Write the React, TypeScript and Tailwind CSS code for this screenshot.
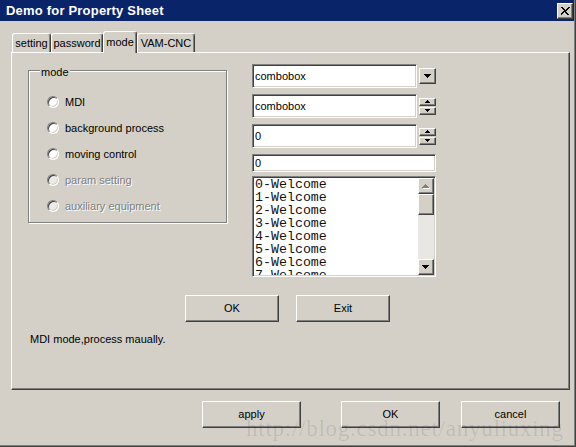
import React from "react"

const raised =
  "border border-t-white border-l-white border-b-[#404040] border-r-[#404040] shadow-[inset_-1px_-1px_0_#808080] bg-[#d4d0c8]"
const sunken =
  "border border-t-[#808080] border-l-[#808080] border-b-white border-r-white shadow-[inset_1px_1px_0_#404040,inset_-1px_-1px_0_#d4d0c8] bg-white"

function Arrow({ small = false, up = false, disabled = false }: { small?: boolean; up?: boolean; disabled?: boolean }) {
  const d = small ? "M0 0h5v1h-1v1h-1v1h-1v-1h-1v-1h-1z" : "M0 0h7v1h-1v1h-1v1h-1v1h-1v-1h-1v-1h-1v-1h-1z"
  const w = small ? 5 : 7
  const h = small ? 3 : 4
  return (
    <svg width={w + 1} height={h + 1} viewBox={`0 0 ${w + 1} ${h + 1}`} className={up ? "rotate-180" : ""} shapeRendering="crispEdges">
      {disabled && <path d={d} fill="#fff" transform={up ? "translate(0 0)" : "translate(1 1)"} />}
      <path d={d} fill={disabled ? "#808080" : "#000"} transform={up ? "translate(1 1)" : ""} />
    </svg>
  )
}

function Radio({ label, disabled = false }: { label: string; disabled?: boolean }) {
  return (
    <div className="h-[26px] flex items-center gap-[6px]">
      <span
        className={`w-[12px] h-[12px] rounded-full border border-t-[#808080] border-l-[#808080] border-b-white border-r-white shadow-[inset_1px_1px_0_#404040,inset_-1px_-1px_0_#d4d0c8] ${
          disabled ? "bg-[#ecebe7]" : "bg-white"
        }`}
      />
      <span className={disabled ? "text-[#808080] [text-shadow:1px_1px_0_#fff]" : "text-black"}>{label}</span>
    </div>
  )
}

function Spin() {
  return (
    <div className="flex flex-col gap-[1px]">
      <div className={`${raised} w-[17px] h-[8px] flex items-center justify-center`}>
        <Arrow small up />
      </div>
      <div className={`${raised} w-[17px] h-[8px] flex items-center justify-center`}>
        <Arrow small />
      </div>
    </div>
  )
}

const items = ["0-Welcome", "1-Welcome", "2-Welcome", "3-Welcome", "4-Welcome", "5-Welcome", "6-Welcome", "7-Welcome"]

export default function App() {
  return (
    <div className="relative w-[576px] h-[447px] bg-[#d4d0c8] flex flex-col border-r border-b border-r-[#404040] border-b-[#404040] shadow-[inset_-1px_-1px_0_#808080] text-[11px] leading-[13px] text-black font-['Liberation_Sans',Arial,sans-serif] overflow-hidden">
      {/* title bar */}
      <div className="h-[21px] mr-[1px] bg-[#0a246a] flex items-start justify-between pl-[6px] pr-[1px]">
        <span className="text-white font-bold text-[13px] leading-[21px] tracking-[0.2px]">Demo for Property Sheet</span>
        <div className={`${raised} mt-[3px] w-[16px] h-[16px] flex items-center justify-center`}>
          <svg width="9" height="8" viewBox="0 0 9 8" shapeRendering="crispEdges">
            <path d="M0 0h2v1h1v1h1v1h1v-1h1v-1h1v-1h2v1h-1v1h-1v1h-1v1h-1v1h1v1h1v1h1v1h-2v-1h-1v-1h-1v-1h-1v1h-1v1h-1v1h-2v-1h1v-1h1v-1h1v-1h1v-1h-1v-1h-1v-1h-1z" fill="#000" />
          </svg>
        </div>
      </div>

      {/* tabs */}
      <div className="mt-[10px] h-[21px] pl-[12px] flex items-end">
        <div className="w-[39px] h-[19px] border-l border-t border-r border-l-white border-t-white border-r-[#404040] rounded-t-[3px] shadow-[inset_-1px_0_0_#808080] flex justify-center pt-[3px]">
          setting
        </div>
        <div className="w-[52px] h-[19px] border-l border-t border-r border-l-white border-t-white border-r-[#404040] rounded-t-[3px] shadow-[inset_-1px_0_0_#808080] flex justify-center pt-[3px]">
          password
        </div>
        <div className="relative z-10 w-[34px] h-[22px] mb-[-1px] bg-[#d4d0c8] border-l border-t border-r border-l-white border-t-white border-r-[#404040] rounded-t-[3px] shadow-[inset_-1px_0_0_#808080] flex justify-center pt-[4px]">
          mode
        </div>
        <div className="w-[58px] h-[19px] border-l border-t border-r border-l-white border-t-white border-r-[#404040] rounded-t-[3px] shadow-[inset_-1px_0_0_#808080] flex justify-center pt-[3px]">
          VAM-CNC
        </div>
      </div>

      {/* tab page */}
      <div className="ml-[11px] w-[559px] h-[338px] border border-t-white border-l-white border-r-[#404040] border-b-[#404040] shadow-[inset_-1px_-1px_0_#808080] flex flex-col">
        <div className="flex items-start pt-[11px] pl-[16px]">
          <div className="relative mt-[6px] w-[199px] h-[153px] border border-[#808080] shadow-[1px_1px_0_#fff,inset_1px_1px_0_#fff] flex flex-col pt-[18px] pl-[18px]">
            <span className="absolute left-[11px] top-[-5px] px-[1px] bg-[#d4d0c8]">mode</span>
            <Radio label="MDI" />
            <Radio label="background process" />
            <Radio label="moving control" />
            <Radio label="param setting" disabled />
            <Radio label="auxiliary equipment" disabled />
          </div>

          <div className="ml-[25px] w-[184px] flex flex-col">
            <div className="flex items-center gap-[2px]">
              <div className={`${sunken} w-[165px] h-[24px] flex items-center pl-[2px]`}>combobox</div>
              <div className={`${raised} w-[17px] h-[16px] flex items-center justify-center`}>
                <Arrow />
              </div>
            </div>
            <div className="mt-[6px] flex items-center gap-[2px]">
              <div className={`${sunken} w-[165px] h-[24px] flex items-center pl-[2px]`}>combobox</div>
              <Spin />
            </div>
            <div className="mt-[6px] flex items-center gap-[2px]">
              <div className={`${sunken} w-[165px] h-[24px] flex items-center pl-[2px]`}>0</div>
              <Spin />
            </div>
            <div className={`${sunken} mt-[6px] w-[184px] h-[18px] flex items-center pl-[2px]`}>0</div>
            <div className={`${sunken} mt-[4px] w-[184px] h-[101px] p-[1px] flex`}>
              <div className="flex-1 overflow-hidden pl-[1px] font-['Liberation_Mono',monospace] text-[13.3px] leading-[13px] text-[#111]">
                {items.map((t) => (
                  <div key={t} className="h-[13px] whitespace-nowrap">
                    {t}
                  </div>
                ))}
              </div>
              <div className="w-[16px] flex flex-col bg-[#e9e7e3]">
                <div className={`${raised} h-[16px] flex items-center justify-center`}>
                  <Arrow up disabled />
                </div>
                <div className={`${raised} h-[21px]`} />
                <div className="flex-1" />
                <div className={`${raised} h-[16px] flex items-center justify-center`}>
                  <Arrow />
                </div>
              </div>
            </div>
          </div>
        </div>

        <div className="mt-[18px] pl-[173px] flex gap-[17px]">
          <div className={`${raised} w-[94px] h-[27px] flex items-center justify-center`}>OK</div>
          <div className={`${raised} w-[94px] h-[27px] flex items-center justify-center`}>Exit</div>
        </div>

        <div className="mt-[11px] pl-[18px]">MDI mode,process maually.</div>
      </div>

      {/* sheet buttons */}
      <div className="mt-[11px] pl-[202px] flex">
        <div className={`${raised} w-[99px] h-[27px] flex items-center justify-center`}>apply</div>
        <div className={`${raised} ml-[40px] w-[99px] h-[27px] flex items-center justify-center`}>OK</div>
        <div className={`${raised} ml-[21px] w-[99px] h-[27px] flex items-center justify-center`}>cancel</div>
      </div>

      <span className="absolute left-[246px] top-[417px] font-['Liberation_Serif',serif] text-[23px] leading-none tracking-[0.75px] text-black/10 pointer-events-none">
        http://blog.csdn.net/anyuliuxing
      </span>
    </div>
  )
}
